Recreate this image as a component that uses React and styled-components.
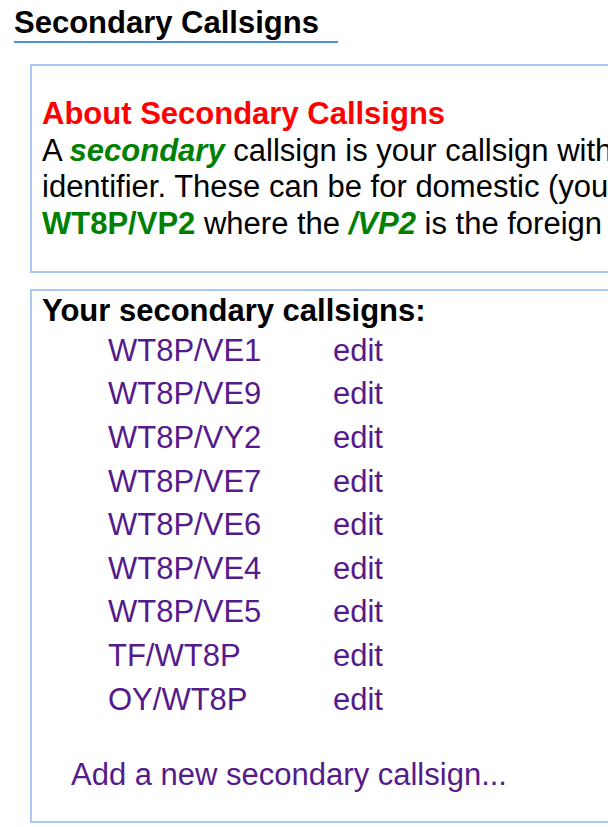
import styled, { createGlobalStyle } from "styled-components";

const GlobalStyle = createGlobalStyle`
  html, body {
    margin: 0;
    padding: 0;
    overflow: hidden;
    background: #fff;
  }
  body {
    font-family: "Liberation Sans", Arial, sans-serif;
    font-size: 31px;
    line-height: 36px;
    color: #000;
  }
`;

const Page = styled.div`
  width: 1000px;
  padding: 4px 0 0 14px;
`;

const Title = styled.h2`
  display: inline-block;
  margin: 0;
  padding-right: 19px;
  font-size: 31px;
  line-height: 37px;
  font-weight: bold;
  border-bottom: 2px solid #4a90e2;
`;

const Box = styled.div`
  margin: ${(p) => p.$top}px 0 0 16px;
  border: 2px solid #a9c9f2;
  padding: 0 10px;
  width: 900px;
`;

const Para = styled.p`
  margin: 30px 0 28px;
  line-height: 36.7px;
  white-space: nowrap;
`;

const Red = styled.div`
  color: #ff0000;
  font-weight: bold;
`;

const Green = styled.span`
  color: #008000;
  font-weight: bold;
  font-style: ${(p) => (p.$italic ? "italic" : "normal")};
`;

const ListHead = styled.div`
  font-weight: bold;
  padding-top: 2px;
  line-height: 36px;
`;

const List = styled.div`
  display: grid;
  grid-template-columns: 225px auto;
  padding-left: 66px;
`;

const Link = styled.a`
  color: #551a8b;
  text-decoration: none;
  line-height: 35.6px;
  padding: 4px 0;
  cursor: pointer;
`;

const AddLink = styled.p`
  margin: 36px 0 28px 29px;
  color: #551a8b;
`;

const calls = [
  "WT8P/VE1",
  "WT8P/VE9",
  "WT8P/VY2",
  "WT8P/VE7",
  "WT8P/VE6",
  "WT8P/VE4",
  "WT8P/VE5",
  "TF/WT8P",
  "OY/WT8P",
];

export default function App() {
  return (
    <>
      <GlobalStyle />
      <Page>
        <Title>Secondary Callsigns</Title>
        <Box $top={21}>
          <Para>
            <Red>About Secondary Callsigns</Red>
            A <Green $italic>secondary</Green> callsign is your callsign with a prefix or suffix
            <br />
            identifier. These can be for domestic (your home area) or foreign operation, e.g.
            <br />
            <Green>WT8P/VP2</Green> where the <Green $italic>/VP2</Green> is the foreign country identifier.
          </Para>
        </Box>
        <Box $top={16}>
          <ListHead>Your secondary callsigns:</ListHead>
          <List>
            {calls.map((c) => [
              <Link key={c}>{c}</Link>,
              <Link key={c + "-edit"}>edit</Link>,
            ])}
          </List>
          <AddLink>Add a new secondary callsign...</AddLink>
        </Box>
      </Page>
    </>
  );
}
